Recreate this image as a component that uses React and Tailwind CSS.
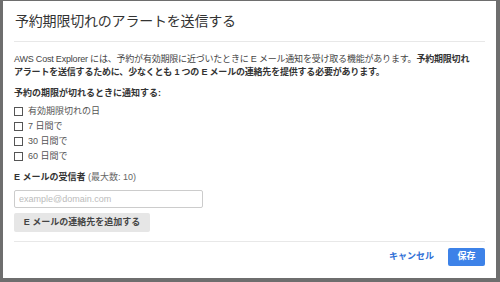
export default function App() {
  const options = ['有効期限切れの日', '7 日間で', '30 日間で', '60 日間で'];

  return (
    <div
      className="w-[500px] h-[282px] bg-[#6e6e6e] pl-[3px] pt-[1px] pr-[4px] pb-[4px]"
      style={{ fontFamily: '"Liberation Sans", "Noto Sans CJK JP", sans-serif' }}
    >
      <div className="h-full bg-white px-[11px] flex flex-col text-[#444]">
        {/* header */}
        <div className="h-[41px] flex items-center border-b border-[#e8e8e8]">
          <h1 className="text-[14px] text-[#333] font-normal pl-[1px] tracking-[-0.2px]">予約期限切れのアラートを送信する</h1>
        </div>

        {/* body */}
        <p className="mt-[11px] text-[9px] leading-[13px] whitespace-nowrap tracking-[-0.2px]">
          AWS Cost Explorer には、予約が有効期限に近づいたときに E メール通知を受け取る機能があります。
          <span className="font-bold text-[#333]">予約期限切れ</span>
          <br />
          <span className="font-bold text-[#333]">
            アラートを送信するために、少なくとも 1 つの E メールの連絡先を提供する必要があります。
          </span>
        </p>

        <div className="mt-[8px] text-[9px] leading-[13px] font-bold text-[#333]">予約の期限が切れるときに通知する:</div>

        <div className="mt-[4px] flex flex-col">
          {options.map((o) => (
            <label key={o} className="h-[15px] flex items-center gap-[5px] text-[9px] text-[#555]">
              <span className="w-[9px] h-[9px] border border-[#555] bg-white" />
              {o}
            </label>
          ))}
        </div>

        <div className="mt-[7px] text-[9px] leading-[13px] text-[#333]">
          <span className="font-bold">E メールの受信者</span>
          <span className="text-[#666]"> (最大数: 10)</span>
        </div>

        <input
          className="mt-[6px] w-[189px] h-[18px] border border-[#ccc] rounded-[2px] px-[4px] text-[9px] outline-none placeholder:text-[#bbb]"
          placeholder="example@domain.com"
        />

        <button className="mt-[5px] w-[136px] h-[19px] bg-[#e6e6e6] rounded-[2px] text-[9px] font-bold text-[#444] flex items-center justify-center">
          E メールの連絡先を追加する
        </button>

        <div className="mt-[9px] border-t border-[#e8e8e8]" />

        {/* footer */}
        <div className="pt-[6px] flex justify-end items-center gap-[14px]">
          <button className="text-[9px] text-[#2f6fd6] font-bold">キャンセル</button>
          <button className="w-[37px] h-[18px] bg-[#3d82e8] text-white text-[9px] font-bold rounded-[2px]">保存</button>
        </div>
      </div>
    </div>
  );
}
